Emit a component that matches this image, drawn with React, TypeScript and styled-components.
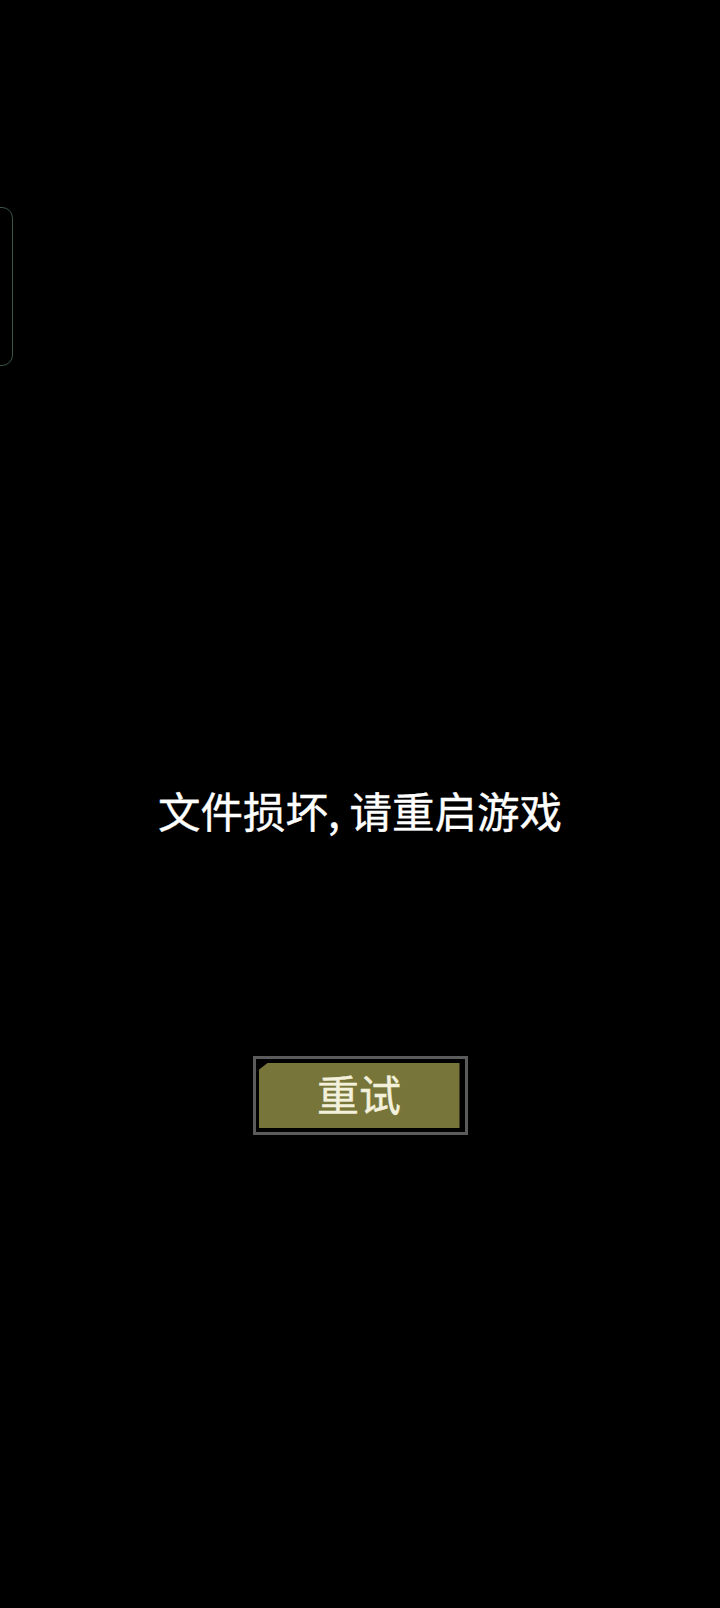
import React, { FC } from "react";
import styled, { createGlobalStyle } from "styled-components";

const GlobalStyle = createGlobalStyle`
    html, body {
        margin: 0;
        padding: 0;
        background: #000000;
    }
    body {
        font-family: "Noto Sans CJK SC", "Noto Sans", sans-serif;
    }
`;

const Screen = styled.div`
    position: relative;
    width: 720px;
    height: 1608px;
    overflow: hidden;
    background: #000000;
    display: flex;
    flex-direction: column;
    align-items: center;
    padding-top: 785px;
    box-sizing: border-box;
`;

const SideHandle = styled.div`
    position: absolute;
    left: -20px;
    top: 207px;
    width: 33px;
    height: 159px;
    border: 1.5px solid #3a5545;
    border-radius: 11px;
    box-sizing: border-box;
`;

const Message = styled.div`
    color: #ffffff;
    font-size: 42.5px;
    font-weight: 400;
    line-height: 50px;
    white-space: nowrap;
    -webkit-text-stroke: 0.4px #ffffff;
`;

const RetryFrame = styled.div`
    margin-top: 221px;
    width: 215px;
    height: 79px;
    box-sizing: border-box;
    border: 3px solid #5b5b5b;
    background: #000000;
    padding: 4px 5px 4px 3px;
    display: flex;
`;

const RetryButton = styled.button`
    flex: 1;
    border: none;
    margin: 0;
    padding: 0 0 5px;
    background: #777539;
    color: #f3f0dc;
    font-family: "Noto Sans CJK SC", "Noto Sans", sans-serif;
    font-size: 42px;
    font-weight: 400;
    line-height: 1;
    -webkit-text-stroke: 0.4px #f3f0dc;
    display: flex;
    align-items: center;
    justify-content: center;
    clip-path: polygon(9px 0, 100% 0, 100% 100%, 0 100%, 0 7px);
    cursor: pointer;
`;

const App: FC = () => {
    return (
        <>
            <GlobalStyle />
            <Screen>
                <SideHandle />
                <Message>文件损坏, 请重启游戏</Message>
                <RetryFrame>
                    <RetryButton>重试</RetryButton>
                </RetryFrame>
            </Screen>
        </>
    );
};

export default App;
